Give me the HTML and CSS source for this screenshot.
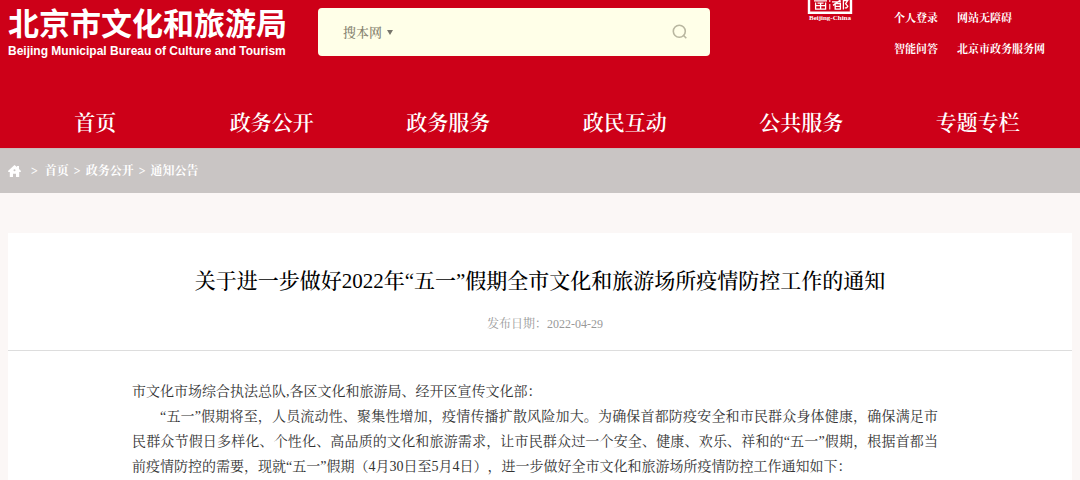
FILE: index.html
```html
<!DOCTYPE html>
<html lang="zh-CN">
<head>
<meta charset="utf-8">
<title>北京市文化和旅游局</title>
<link rel="stylesheet" href="styles.css">
</head>
<body>
<header class="site-header">
  <div class="top">
    <a class="brand" href="#">
      <span class="brand-zh">北京市文化和旅游局</span>
      <span class="brand-en">Beijing Municipal Bureau of Culture and Tourism</span>
    </a>
    <form class="search">
      <label class="scope">
        <select class="scope-select" aria-label="搜索范围"><option>搜本网</option></select>
        <span class="caret"></span>
      </label>
      <input class="search-input" type="text" aria-label="搜索">
      <button class="search-button" type="button" aria-label="搜索">
        <svg width="16" height="16" viewBox="0 0 16 16" fill="none" stroke="#b9b7a0" stroke-width="1.6"><circle cx="7.3" cy="7.3" r="6"/><path d="M11.3 11.3L14.3 14.3"/></svg>
      </button>
    </form>
    <a class="seal" href="#">
      <svg class="seal-mark" width="46" height="14" viewBox="0 0 46 14" fill="none" stroke="#fff">
        <path d="M2 0V12.8H44V0" stroke-width="2.4"/>
        <path d="M22.8 0V2M22.8 4V9.5" stroke-width="1"/>
        <path d="M7 0.8H20M8.6 2.6V9.2H18.6V2.6M8.6 5.6H18.6M13.6 2.6V9.2M10.5 3.2H16.5" stroke-width="1.3"/>
        <path d="M25 1.8H34M33.5 0L26 5.4M28.2 3.6V9.2H33.4V3.6ZM28.2 6.4H33.4M36.4 9.6V0M36.4 0.7H40.6L38.6 3.6L40.8 6.2L39.6 7.8H37.8" stroke-width="1.3"/>
      </svg>
      <span class="seal-text">Beijing-China</span>
    </a>
    <div class="quick">
      <a href="#">个人登录</a><a href="#">网站无障碍</a>
      <a href="#">智能问答</a><a href="#">北京市政务服务网</a>
    </div>
  </div>
  <nav class="nav">
    <a href="#">首页</a><a href="#">政务公开</a><a href="#">政务服务</a><a href="#">政民互动</a><a href="#">公共服务</a><a href="#">专题专栏</a>
  </nav>
</header>
<nav class="crumbs" aria-label="当前位置">
  <svg class="home" width="13" height="13" viewBox="0 0 13 13"><path fill="#fff" fill-rule="evenodd" d="M6.5 0L9 2.1V0.9H11V3.9L12.8 5.7V6.9H11.2V11.9H8V8.7H5V11.9H1.8V6.9H0.2V5.7ZM6.5 4.3a1 1 0 1 0 0 2a1 1 0 1 0 0-2Z"/></svg>
  <span class="first">&gt;</span>
  <a href="#">首页</a><span>&gt;</span><a href="#">政务公开</a><span>&gt;</span><a href="#">通知公告</a>
</nav>
<main class="article">
  <h1 class="title">关于进一步做好2022年“五一”假期全市文化和旅游场所疫情防控工作的通知</h1>
  <p class="date">发布日期：2022-04-29</p>
  <div class="content">
    <p>市文化市场综合执法总队,各区文化和旅游局、经开区宣传文化部：</p>
    <p class="indent">“五一”假期将至，人员流动性、聚集性增加，疫情传播扩散风险加大。为确保首都防疫安全和市民群众身体健康，确保满足市民群众节假日多样化、个性化、高品质的文化和旅游需求，让市民群众过一个安全、健康、欢乐、祥和的“五一”假期，根据首都当前疫情防控的需要，现就“五一”假期（4月30日至5月4日），进一步做好全市文化和旅游场所疫情防控工作通知如下：</p>
  </div>
</main>
</body>
</html>
```
FILE: styles.css
```css
* { box-sizing: border-box; }
body {
  margin: 0;
  background: #fbf7f6;
  color: #333;
  font-family: "Liberation Serif", "Noto Serif CJK SC", "Noto Sans CJK SC", serif;
  text-spacing-trim: space-all;
}
a { color: inherit; text-decoration: none; }
p, h1 { margin: 0; }

.site-header { background: #cd0018; color: #fff; }
.top {
  display: flex;
  align-items: flex-start;
  height: 99px;
  padding: 0 38px 0 8px;
}
.brand {
  display: flex;
  flex-direction: column;
  width: 310px;
  padding-top: 7px;
  font-family: "Liberation Sans", "Noto Sans CJK SC", sans-serif;
  font-weight: 700;
  white-space: nowrap;
}
.brand-zh { font-size: 31px; line-height: 36px; }
.brand-en { font-size: 12px; line-height: 17px; }

.search {
  display: flex;
  align-items: center;
  flex: 1;
  height: 48px;
  margin: 8px 96px 0 0;
  padding: 0 22px 0 25px;
  border-radius: 4px;
  background: #ffffe8;
}
.scope { display: flex; align-items: center; gap: 4px; }
.scope-select {
  appearance: none;
  padding: 2px 0 0;
  border: 0;
  background: none;
  color: #85826f;
  font: 500 13px/20px "Liberation Serif", "Noto Serif CJK SC", serif;
}
.caret {
  border: 3px solid transparent;
  border-top: 5px solid #77756a;
  border-bottom: 0;
}
.search-input {
  flex: 1;
  min-width: 0;
  height: 32px;
  margin: 0 12px;
  border: 0;
  outline: 0;
  background: none;
  font-size: 13px;
}
.search-button {
  display: flex;
  padding: 0;
  border: 0;
  background: none;
}

.seal { display: flex; flex-direction: column; align-items: center; width: 48px; }
.seal-mark { display: block; }
.seal-text { font-size: 7px; line-height: 9px; font-weight: 700; white-space: nowrap; }

.quick {
  display: grid;
  grid-template-columns: 63px 85px;
  margin: 3px 0 0 40px;
  font-size: 11px;
  line-height: 31px;
  font-weight: 700;
  white-space: nowrap;
}
.nav {
  display: grid;
  grid-template-columns: repeat(6, 1fr);
  padding: 0 14px 0 7px;
  font-size: 21px;
  line-height: 49px;
  font-weight: 600;
  text-align: center;
}

.crumbs {
  display: flex;
  align-items: center;
  gap: 5px;
  height: 45px;
  padding: 0 8px;
  background: #c9c5c4;
  border-top: 1px solid #c9bbb9;
  color: #fff;
  font-size: 12px;
  line-height: 20px;
  font-weight: 700;
}
.first { margin: 0 2px 0 5px; }

.article { margin: 40px 8px 0; background: #fff; }
.title {
  padding-top: 32px;
  color: #000;
  font-size: 21px;
  line-height: 32px;
  font-weight: 500;
  text-align: center;
}
.date {
  padding: 17px 0 16px 10px;
  border-bottom: 1px solid #ddd;
  color: #999;
  font-size: 12px;
  line-height: 20px;
  text-align: center;
}
.content {
  padding: 28px 134px 28px 124px;
  font-size: 14px;
  line-height: 25px;
  text-align: justify;
}
.indent { text-indent: 2em; }
```
